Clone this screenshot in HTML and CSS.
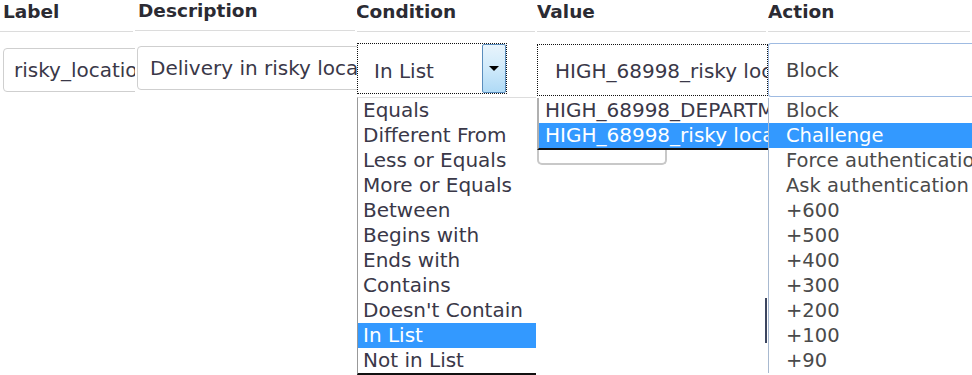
FILE: index.html
```html
<!DOCTYPE html>
<html>
<head>
<meta charset="utf-8">
<link rel="stylesheet" href="styles.css">
</head>
<body>
<div class="table">
  <div class="col col-label">
    <div class="th">Label</div>
    <div class="cell"><div class="input">risky_location</div></div>
  </div>
  <div class="col col-desc">
    <div class="th">Description</div>
    <div class="cell"><div class="input desc">Delivery in risky location</div></div>
  </div>
  <div class="col col-cond">
    <div class="th">Condition</div>
    <div class="cell">
      <div class="select dotted cond">
        <span class="sel-text">In List</span>
        <span class="btn"><span class="tri"></span></span>
      </div>
    </div>
    <ul class="list cond-list">
      <li>Equals</li>
      <li>Different From</li>
      <li>Less or Equals</li>
      <li>More or Equals</li>
      <li>Between</li>
      <li>Begins with</li>
      <li>Ends with</li>
      <li>Contains</li>
      <li>Doesn't Contain</li>
      <li class="on">In List</li>
      <li>Not in List</li>
    </ul>
  </div>
  <div class="col col-val">
    <div class="th">Value</div>
    <div class="cell">
      <div class="select dotted val">HIGH_68998_risky location</div>
    </div>
    <ul class="list val-list">
      <li>HIGH_68998_DEPARTMENT</li>
      <li class="on">HIGH_68998_risky location</li>
    </ul>
    <div class="under-box"></div>
    <div class="mark"></div>
  </div>
  <div class="col col-act">
    <div class="th">Action</div>
    <div class="cell">
      <div class="select act">Block</div>
    </div>
    <ul class="list act-list">
      <li>Block</li>
      <li class="on">Challenge</li>
      <li>Force authentication</li>
      <li>Ask authentication</li>
      <li>+600</li>
      <li>+500</li>
      <li>+400</li>
      <li>+300</li>
      <li>+200</li>
      <li>+100</li>
      <li>+90</li>
    </ul>
  </div>
</div>
</body>
</html>
```

FILE: styles.css
```css
html, body {
  margin: 0;
  padding: 0;
  background: #fff;
  overflow: hidden;
  height: 375px;
}
body {
  font-family: "DejaVu Sans", Verdana, sans-serif;
  color: #333;
}
.table {
  display: flex;
  width: 972px;
  height: 375px;
  overflow: hidden;
}
.col {
  display: flex;
  flex-direction: column;
  flex: none;
  overflow: hidden;
}
.col-label { width: 135px; }
.col-desc { width: 222px; }
.col-cond { width: 180px; }
.col-val { width: 231px; }
.col-act { width: 204px; }

.th {
  height: 29px;
  padding-top: 2px;
  border-bottom: 1px solid #dcdcdc;
  font-weight: bold;
  font-size: 18.5px;
  line-height: 20px;
  color: #2b2b33;
  margin-right: 2px;
  white-space: nowrap;
}
.col-label .th { padding-left: 3px; }
.col-desc .th { padding-left: 3px; margin-top: -1px; }
.col-cond .th { margin-left: -1px; }

.cell {
  height: 65px;
  white-space: nowrap;
}
.input {
  box-sizing: border-box;
  height: 44px;
  width: 140px;
  margin-top: 16px;
  margin-left: 3px;
  border: 1px solid #cfcfcf;
  border-radius: 4px;
  padding-left: 10px;
  font-size: 20px;
  line-height: 42px;
  color: #3a3848;
  overflow: hidden;
}
.input.desc {
  width: 228px;
  margin-left: 2px;
  margin-top: 15px;
  padding-left: 12px;
}
.select {
  box-sizing: border-box;
  position: relative;
  font-size: 20px;
  color: #3a3848;
  overflow: hidden;
  white-space: nowrap;
}
.dotted { border: 1px dotted #111; }
.cond {
  width: 150px;
  height: 51px;
  margin-top: 11px;
  display: flex;
  align-items: center;
  padding-left: 16px;
  padding-top: 5px;
}
.cond .sel-text { flex: 1; }
.btn {
  position: absolute;
  right: 0;
  top: 0;
  bottom: 0;
  width: 24px;
  box-sizing: border-box;
  border: 1px solid #5a8dbd;
  border-radius: 2px;
  background: linear-gradient(#e8f4fc, #d2ebfb 45%, #afdaf6);
  display: flex;
  flex-direction: column;
  align-items: center;
  padding-top: 21px;
}
.tri {
  width: 0;
  height: 0;
  border-left: 5px solid transparent;
  border-right: 5px solid transparent;
  border-top: 5px solid #000;
}
.val {
  width: 231px;
  height: 52px;
  margin-top: 12px;
  padding-left: 17px;
  padding-top: 2px;
  line-height: 48px;
}
.act {
  width: 204px;
  height: 54px;
  margin-top: 11px;
  border: 1px solid #9fbbe2;
  border-right: none;
  border-radius: 3px 0 0 3px;
  padding-left: 17px;
  padding-top: 2px;
  line-height: 50px;
  color: #444;
  font-size: 19.5px;
}

.list {
  list-style: none;
  margin: 0;
  padding: 0;
  font-size: 20px;
  line-height: 25px;
  white-space: nowrap;
  overflow: hidden;
}
.list li {
  padding-left: 5px;
  color: #3a3848;
  overflow: hidden;
}
.list li.on {
  background: #3399ff;
  color: #fff;
}
.cond-list {
  width: 178px;
  border-left: 1px solid #999;
  border-top: 1px solid #ddd;
  border-bottom: 2px solid #111;
}
.val-list {
  width: 231px;
  box-sizing: border-box;
  border-left: 2px solid #b0b0b0;
  border-bottom: 2px solid #111;
  margin-top: 1px;
}
.val-list li { padding-left: 6px; }
.under-box {
  width: 130px;
  height: 15px;
  box-sizing: border-box;
  border: 2px solid #c8c8c8;
  border-top: none;
  border-radius: 0 0 5px 5px;
}
.mark {
  align-self: flex-end;
  width: 2px;
  height: 45px;
  margin-top: 133px;
  margin-right: 1px;
  background: #3c4660;
}
.act-list {
  width: 204px;
  box-sizing: border-box;
  border-left: 1px solid #a8b9d0;
  margin-top: 1px;
  font-size: 19.5px;
}
.act-list li {
  padding-left: 17px;
  color: #4a4a4a;
}
.act-list li.on { color: #fff; }
```
